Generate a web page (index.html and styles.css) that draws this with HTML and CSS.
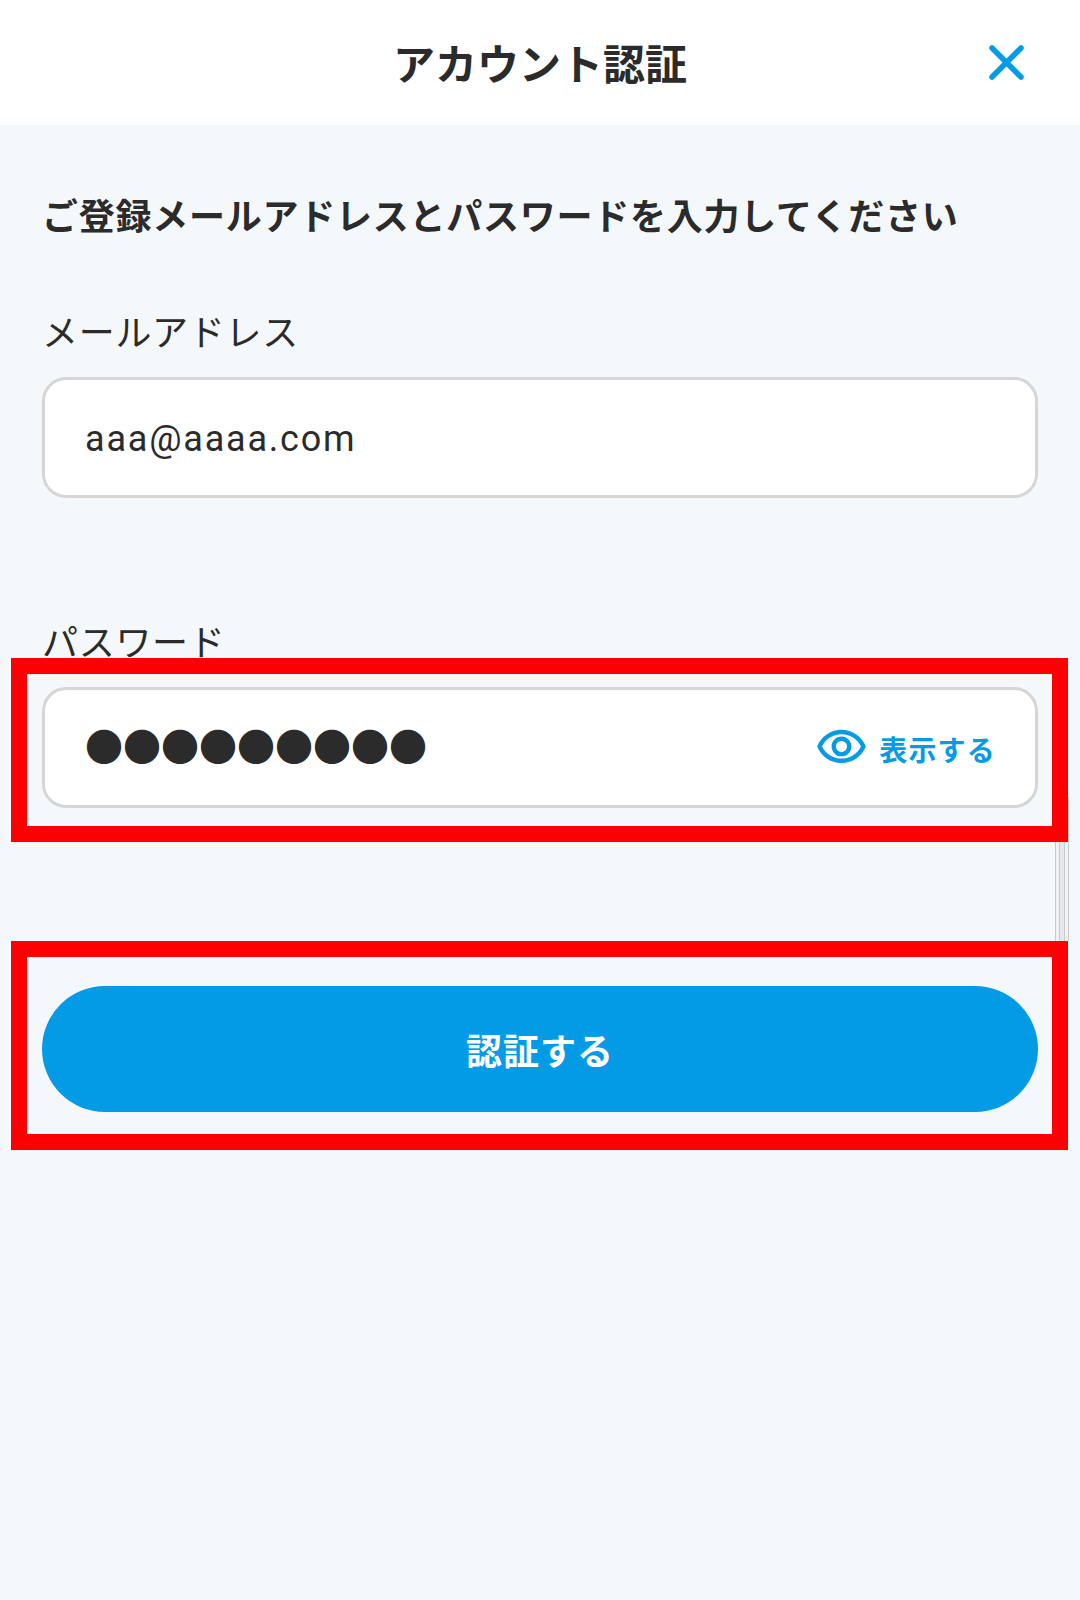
FILE: index.html
```html
<!DOCTYPE html>
<html lang="ja">
<head>
    <meta charset="UTF-8">
    <title>アカウント認証</title>
    <link rel="stylesheet" href="styles.css">
</head>
<body>
    <header class="header">
        <h1>アカウント認証</h1>
        <svg class="close-icon" viewBox="0 0 35 35" fill="none" stroke="#039be5" stroke-width="5.5" stroke-linecap="round">
            <path d="M3 3L32 32M32 3L3 32"/>
        </svg>
    </header>

    <main class="content">
        <p class="lead">ご登録メールアドレスとパスワードを入力してください</p>

        <div class="field field-email">
            <label>メールアドレス</label>
            <div class="input-box">
                <span class="email-value">aaa@aaaa.com</span>
            </div>
        </div>

        <div class="field field-password">
            <label>パスワード</label>
            <div class="input-box">
                <span class="password-value">●●●●●●●●●</span>
                <span class="show-toggle">
                    <svg class="eye-icon" viewBox="0 0 24 24" fill="#039be5">
                        <path d="M12 6c3.79 0 7.17 2.13 8.82 5.5C19.17 14.87 15.79 17 12 17s-7.17-2.13-8.82-5.5C4.83 8.13 8.21 6 12 6m0-2C7 4 2.73 7.11 1 11.5 2.73 15.89 7 19 12 19s9.27-3.11 11-7.5C21.27 7.11 17 4 12 4zm0 5c1.38 0 2.5 1.12 2.5 2.5S13.38 14 12 14s-2.5-1.12-2.5-2.5S10.62 9 12 9m0-2c-2.48 0-4.5 2.02-4.5 4.5S9.52 16 12 16s4.5-2.02 4.5-4.5S14.48 7 12 7z"/>
                    </svg>
                    <span class="show-label">表示する</span>
                </span>
            </div>
        </div>

        <button class="submit-button">認証する</button>
    </main>

    <!-- annotation boxes that sit over the screenshot -->
    <div class="scroll-lines"></div>
    <div class="mark mark-password"></div>
    <div class="mark mark-submit"></div>
</body>
</html>
```

FILE: styles.css
```css
body {
    font-family: "Noto Sans CJK JP", Roboto, sans-serif;
    margin: 0;
    height: 1600px;
    overflow: hidden;
    position: relative;
    background-color: #f5f8fb;
    color: #2b2b2b;
}
.header {
    height: 125px;
    background-color: #fff;
    position: relative;
    display: flex;
    align-items: center;
    justify-content: center;
}
.header h1 {
    margin: 0;
    font-size: 42px;
    font-weight: 700;
    line-height: 1;
    position: relative;
    top: -1px;
}
.close-icon {
    position: absolute;
    left: 989px;
    top: 45px;
    width: 35px;
    height: 35px;
}
.content {
    padding: 64px 42px 0;
}
.lead {
    margin: 0;
    font-size: 36px;
    font-weight: 700;
    line-height: 50px;
    letter-spacing: 0.75px;
}
.field label {
    display: block;
    font-size: 36px;
    line-height: 50px;
    margin-bottom: 22px;
    letter-spacing: 0.7px;
}
.field-email {
    margin-top: 66px;
}
.field-password {
    margin-top: 117px;
}
.input-box {
    box-sizing: border-box;
    height: 121px;
    background-color: #fff;
    border: 3px solid #d6d6d6;
    border-radius: 24px;
    padding: 0 40px;
    display: flex;
    align-items: center;
    justify-content: space-between;
}
.email-value {
    font-family: Roboto, sans-serif;
    font-size: 36px;
    letter-spacing: 1.8px;
    padding-top: 3px;
}
.password-value {
    font-size: 38px;
    line-height: 1;
    padding-bottom: 5px;
}
.show-toggle {
    display: flex;
    align-items: center;
    gap: 11px;
    margin-right: -1px;
    font-size: 28px;
    font-weight: 700;
    letter-spacing: 1.2px;
    color: #039be5;
    padding-bottom: 1px;
}
.show-label {
    padding-top: 3px;
}
.eye-icon {
    width: 53px;
    height: 53px;
}
.submit-button {
    display: block;
    box-sizing: border-box;
    width: 100%;
    height: 126px;
    margin-top: 178px;
    border: none;
    border-radius: 63px;
    background-color: #039be5;
    color: #fff;
    font-family: inherit;
    font-size: 36px;
    font-weight: 700;
    letter-spacing: 1px;
}
.mark {
    position: absolute;
    left: 11px;
    width: 1057px;
    box-sizing: border-box;
    border: 16px solid #ff0000;
}
.mark-password {
    top: 658px;
    height: 184px;
}
.mark-submit {
    top: 941px;
    height: 209px;
}
.scroll-lines {
    position: absolute;
    left: 1055px;
    top: 797px;
    width: 14px;
    height: 144px;
    background: linear-gradient(to right,
        #c9c9c9 0, #c9c9c9 1px, #f0f2f5 1px, #f0f2f5 4px,
        #c9c9c9 4px, #c9c9c9 5px, #e6e8ea 5px, #e6e8ea 9px,
        #c9c9c9 9px, #c9c9c9 10px, #f0f2f5 10px, #f0f2f5 13px,
        #c9c9c9 13px, #c9c9c9 14px);
}
```
